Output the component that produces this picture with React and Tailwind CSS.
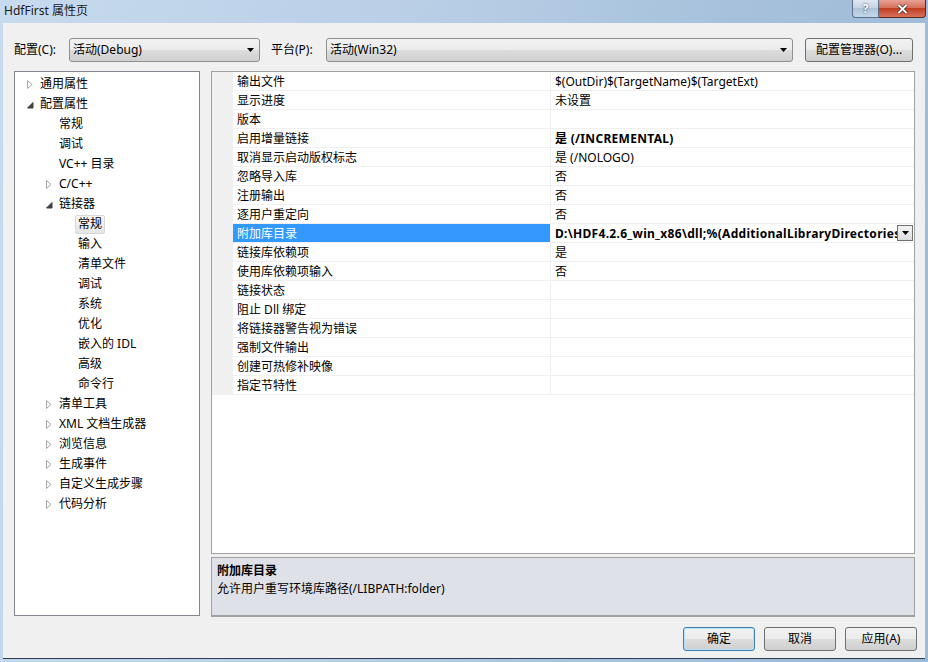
import React from "react";

const tree = [
  { t: "通用属性", lvl: 0, arrow: "c" },
  { t: "配置属性", lvl: 0, arrow: "e" },
  { t: "常规", lvl: 1 },
  { t: "调试", lvl: 1 },
  { t: "VC++ 目录", lvl: 1 },
  { t: "C/C++", lvl: 1, arrow: "c" },
  { t: "链接器", lvl: 1, arrow: "e" },
  { t: "常规", lvl: 2, sel: true },
  { t: "输入", lvl: 2 },
  { t: "清单文件", lvl: 2 },
  { t: "调试", lvl: 2 },
  { t: "系统", lvl: 2 },
  { t: "优化", lvl: 2 },
  { t: "嵌入的 IDL", lvl: 2 },
  { t: "高级", lvl: 2 },
  { t: "命令行", lvl: 2 },
  { t: "清单工具", lvl: 1, arrow: "c" },
  { t: "XML 文档生成器", lvl: 1, arrow: "c" },
  { t: "浏览信息", lvl: 1, arrow: "c" },
  { t: "生成事件", lvl: 1, arrow: "c" },
  { t: "自定义生成步骤", lvl: 1, arrow: "c" },
  { t: "代码分析", lvl: 1, arrow: "c" },
];

const indent = { 0: "pl-[12px]", 1: "pl-[31px]", 2: "pl-[50px]" };

const props = [
  { n: "输出文件", v: "$(OutDir)$(TargetName)$(TargetExt)" },
  { n: "显示进度", v: "未设置" },
  { n: "版本", v: "" },
  { n: "启用增量链接", v: "是 (/INCREMENTAL)", bold: true },
  { n: "取消显示启动版权标志", v: "是 (/NOLOGO)" },
  { n: "忽略导入库", v: "否" },
  { n: "注册输出", v: "否" },
  { n: "逐用户重定向", v: "否" },
  { n: "附加库目录", v: "D:\\HDF4.2.6_win_x86\\dll;%(AdditionalLibraryDirectories)", bold: true, sel: true },
  { n: "链接库依赖项", v: "是" },
  { n: "使用库依赖项输入", v: "否" },
  { n: "链接状态", v: "" },
  { n: "阻止 Dll 绑定", v: "" },
  { n: "将链接器警告视为错误", v: "" },
  { n: "强制文件输出", v: "" },
  { n: "创建可热修补映像", v: "" },
  { n: "指定节特性", v: "" },
];

function Arrow({ kind }) {
  if (kind === "c")
    return (
      <svg width="6" height="9" viewBox="0 0 6 9">
        <path d="M0.5 0.5 L5 4.5 L0.5 8.5 Z" fill="#fff" stroke="#a6a6a6" />
      </svg>
    );
  if (kind === "e")
    return (
      <svg width="7" height="7" viewBox="0 0 7 7" className="mt-[2px]">
        <path d="M6 0.5 L6 6 L0.5 6 Z" fill="#404040" stroke="#404040" />
      </svg>
    );
  return null;
}

function DropTri() {
  return (
    <svg width="7" height="4" viewBox="0 0 7 4">
      <path d="M0 0 L7 0 L3.5 4 Z" fill="#000" />
    </svg>
  );
}

function Combo({ text, w }) {
  return (
    <div
      className={`${w} h-[24px] flex items-center justify-between border border-[#8e8f8f] rounded-[3px] pl-[3px] pr-[5px] bg-[linear-gradient(to_bottom,#f2f2f2,#ebebeb_50%,#dddddd_50%,#cfcfcf)]`}
    >
      <span>{text}</span>
      <DropTri />
    </div>
  );
}

function Btn({ children, w, def }) {
  return (
    <div
      className={`${w} h-[24px] flex items-center justify-center rounded-[3px] border ${
        def ? "border-[#3c7fb1] shadow-[inset_0_0_0_1px_#b6e3fb]" : "border-[#707070]"
      } bg-[linear-gradient(to_bottom,#f2f2f2,#ebebeb_50%,#dddddd_50%,#cfcfcf)]`}
    >
      {children}
    </div>
  );
}

export default function App() {
  return (
    <div
      className="w-[928px] h-[662px] flex flex-col text-[12px] text-black bg-[linear-gradient(100deg,#c7daee,#b9cfe6_40%,#a7c1dc_70%,#9db9d6)]"
      style={{ fontFamily: '"Noto Sans", "Noto Sans CJK SC", sans-serif' }}
    >
      {/* title bar */}
      <div className="h-[23px] flex items-start relative">
        <div className="pl-[4px] pt-[3px] leading-[16px] text-[12px] text-[#1a1a1a]">HdfFirst 属性页</div>
        <div className="ml-auto mr-[2px] flex">
          <div className="w-[27px] h-[18px] rounded-bl-[4px] border border-[#5a6f8a] border-t-0 bg-[linear-gradient(to_bottom,#dfe8f2,#c2d3e6_50%,#aec3da_50%,#c6d7ea)] flex items-center justify-center text-[12px] font-bold text-white [text-shadow:0_0_2px_#222]">
            ?
          </div>
          <div className="w-[47px] h-[18px] rounded-br-[4px] border border-[#5b2a22] border-t-0 border-l-0 bg-[linear-gradient(to_bottom,#e8a293,#d5705c_45%,#c23c22_50%,#d8735c)] flex items-center justify-center">
            <svg width="11" height="10" viewBox="0 0 11 10">
              <path d="M1.5 1 L9.5 9 M9.5 1 L1.5 9" stroke="#3a1a14" strokeWidth="3.4" />
              <path d="M1.5 1 L9.5 9 M9.5 1 L1.5 9" stroke="#fff" strokeWidth="2" />
            </svg>
          </div>
        </div>
      </div>

      {/* client */}
      <div className="flex-1 mx-[3px] mb-[3px] bg-[#f0f0f0] border-b border-[#2c3e55] flex flex-col">
        {/* top bar */}
        <div className="flex items-center h-[24px] mt-[15px] ml-[11px]">
          <span className="w-[55px]">配置(C):</span>
          <Combo text="活动(Debug)" w="w-[191px]" />
          <span className="w-[55px] ml-[11px]">平台(P):</span>
          <Combo text="活动(Win32)" w="w-[467px]" />
          <div className="ml-[12px]">
            <Btn w="w-[108px]">配置管理器(O)...</Btn>
          </div>
        </div>

        {/* main */}
        <div className="flex mt-[9px] ml-[11px]">
          {/* tree */}
          <div className="w-[186px] h-[545px] border border-[#828790] bg-white pt-[2px]">
            {tree.map((it, i) => (
              <div key={i} className={`h-[20px] flex items-center ${indent[it.lvl]}`}>
                <div className="w-[13px] flex items-center">
                  <Arrow kind={it.arrow} />
                </div>
                {it.sel ? (
                  <span className="ml-[-3px] px-[2px] h-[19px] flex items-center border border-[#d9d9d9] rounded-[2px] bg-[linear-gradient(to_bottom,#f8f8f8,#e5e5e5)]">
                    {it.t}
                  </span>
                ) : (
                  <span>{it.t}</span>
                )}
              </div>
            ))}
          </div>

          {/* right column */}
          <div className="ml-[11px] w-[704px] flex flex-col">
            <div className="h-[483px] border border-[#a0a0a0] bg-white flex flex-col">
              {props.map((p, i) => (
                <div key={i} className="h-[19px] flex border-b border-[#f0f0f0]">
                  <div className="w-[21px] bg-[#f0f0f0]" />
                  <div
                    className={`w-[318px] border-r border-[#f0f0f0] pl-[4px] pt-[2px] flex items-center ${
                      p.sel ? "bg-[#3399ff] text-white" : ""
                    }`}
                  >
                    {p.n}
                  </div>
                  <div className="flex-1 min-w-0 flex items-center pl-[4px] pr-[1px]">
                    <span
                      className={`flex-1 overflow-hidden whitespace-nowrap pt-[2px] ${
                        p.bold ? "font-bold tracking-[0.3px]" : ""
                      }`}
                    >
                      {p.v}
                    </span>
                    {p.sel && (
                      <div className="w-[16px] h-[16px] border border-[#707070] bg-[linear-gradient(to_bottom,#f4f4f4,#dcdcdc)] flex items-center justify-center">
                        <DropTri />
                      </div>
                    )}
                  </div>
                </div>
              ))}
            </div>
            <div className="h-[3px]" />
            <div className="h-[60px] border border-[#a0a0a0] border-b-2 border-b-[#a0a0a0] bg-[#dfe1e8] pl-[5px] pt-[4px]">
              <div className="font-bold leading-[18px]">附加库目录</div>
              <div className="leading-[18px]">允许用户重写环境库路径(/LIBPATH:folder)</div>
            </div>
          </div>
        </div>

        {/* buttons */}
        <div className="flex justify-end gap-[9px] mt-[10px] mr-[8px]">
          <Btn w="w-[72px]" def>确定</Btn>
          <Btn w="w-[72px]">取消</Btn>
          <Btn w="w-[72px]">应用(A)</Btn>
        </div>
      </div>
    </div>
  );
}
